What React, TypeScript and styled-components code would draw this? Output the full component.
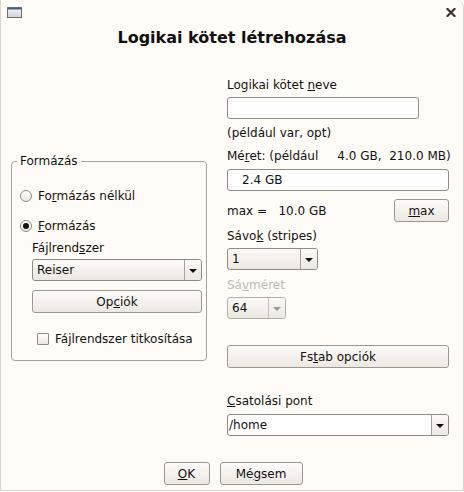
import React from "react";
import styled, { createGlobalStyle } from "styled-components";

const GlobalStyle = createGlobalStyle`
  html, body {
    margin: 0;
    padding: 0;
    background: #ffffff;
  }
`;

const Window = styled.div`
  box-sizing: border-box;
  width: 464px;
  height: 491px;
  display: flex;
  flex-direction: column;
  background: #fffcf7;
  border: 1px solid #d9d6cf;
  border-top: none;
  border-top-right-radius: 7px;
  font-family: "DejaVu Sans", "Noto Sans", sans-serif;
  font-size: 12px;
  line-height: 14px;
  color: #111111;
`;

const TitleBar = styled.div`
  height: 24px;
  display: flex;
  align-items: center;
  justify-content: space-between;
  padding: 0 7px 0 6px;
`;

const Heading = styled.h1`
  margin: 4px 0 0;
  font-size: 16px;
  line-height: 20px;
  font-weight: bold;
  text-align: center;
`;

const Body = styled.div`
  flex: 1;
  display: flex;
  align-items: flex-start;
  padding: 0 14px 0 10px;
`;

const Group = styled.fieldset`
  box-sizing: border-box;
  width: 196px;
  margin: 106px 0 0;
  padding: 0 8px 14px;
  border: 1px solid #a5a29b;
  border-radius: 4px;
  min-width: 0;
`;

const Legend = styled.legend`
  padding: 0 3px;
  margin-left: -3px;
  line-height: 14px;
`;

const OptionRow = styled.label<{ $top: number; $indent?: number }>`
  display: flex;
  align-items: center;
  gap: 6px;
  height: 14px;
  margin-top: ${(p) => p.$top}px;
  padding-left: ${(p) => p.$indent ?? 0}px;
`;

const RadioMark = styled.span<{ $on?: boolean }>`
  box-sizing: border-box;
  width: 12px;
  height: 12px;
  border-radius: 50%;
  border: 1px solid #8e8b85;
  background: linear-gradient(#ffffff, #ebe9e4);
  display: flex;
  align-items: center;
  justify-content: center;

  &::after {
    content: "";
    width: 6px;
    height: 6px;
    border-radius: 50%;
    background: ${(p) => (p.$on ? "#111111" : "transparent")};
  }
`;

const CheckMark = styled.span`
  box-sizing: border-box;
  width: 12px;
  height: 12px;
  border: 1px solid #8e8b85;
  border-radius: 1px;
  background: linear-gradient(#ffffff, #e9e7e2);
`;

const SubBlock = styled.div`
  display: flex;
  flex-direction: column;
  padding-left: 12px;
  margin-top: 8px;
`;

const RightColumn = styled.div`
  display: flex;
  flex-direction: column;
  width: 222px;
  margin: 30px 0 0 20px;
`;

const Label = styled.div<{ $top?: number; $disabled?: boolean }>`
  margin-top: ${(p) => p.$top ?? 0}px;
  white-space: pre;
  color: ${(p) => (p.$disabled ? "#bdbab3" : "inherit")};
`;

const TextInput = styled.div<{ $width: number; $top: number; $indent?: number }>`
  box-sizing: border-box;
  width: ${(p) => p.$width}px;
  height: 22px;
  margin-top: ${(p) => p.$top}px;
  padding-left: ${(p) => p.$indent ?? 4}px;
  border: 1px solid #8e8b85;
  border-radius: 3px;
  background: #ffffff;
  line-height: 20px;
`;

const Button = styled.div<{ $width: number; $top?: number }>`
  box-sizing: border-box;
  width: ${(p) => p.$width}px;
  height: 23px;
  margin-top: ${(p) => p.$top ?? 0}px;
  border: 1px solid #9a978f;
  border-radius: 3px;
  background: linear-gradient(#fdfcfa, #ebe8e2);
  display: flex;
  align-items: center;
  justify-content: center;
  flex-shrink: 0;
`;

const Combo = styled.div<{ $width: number; $top: number; $disabled?: boolean; $editable?: boolean }>`
  box-sizing: border-box;
  width: ${(p) => p.$width}px;
  height: 22px;
  margin-top: ${(p) => p.$top}px;
  display: flex;
  border: 1px solid ${(p) => (p.$disabled ? "#b3b0a9" : "#8e8b85")};
  border-radius: 3px;
  overflow: hidden;
  background: ${(p) => (p.$editable ? "#ffffff" : "linear-gradient(#fbfaf8, #ebe8e2)")};
`;

const ComboValue = styled.div<{ $pad: number }>`
  flex: 1;
  padding-left: ${(p) => p.$pad}px;
  line-height: 20px;
`;

const ComboArrow = styled.div<{ $disabled?: boolean }>`
  width: 16px;
  display: flex;
  align-items: center;
  justify-content: center;
  border-left: 1px solid ${(p) => (p.$disabled ? "#c4c1ba" : "#a5a29b")};
  background: linear-gradient(#fbfaf8, #ebe8e2);

  &::after {
    content: "";
    border-left: 4px solid transparent;
    border-right: 4px solid transparent;
    border-top: 4px solid ${(p) => (p.$disabled ? "#9d9a94" : "#111111")};
    margin-top: 1px;
  }
`;

const MaxRow = styled.div`
  display: flex;
  align-items: center;
  justify-content: space-between;
  margin-top: 8px;
`;

const Footer = styled.div`
  display: flex;
  justify-content: center;
  gap: 10px;
  padding: 0 0 5px 2px;
`;

type ComboBoxProps = {
  value: string;
  width: number;
  top: number;
  pad?: number;
  disabled?: boolean;
  editable?: boolean;
};

const ComboBox = ({ value, width, top, pad = 4, disabled, editable }: ComboBoxProps) => (
  <Combo $width={width} $top={top} $disabled={disabled} $editable={editable}>
    <ComboValue $pad={pad}>{value}</ComboValue>
    <ComboArrow $disabled={disabled} />
  </Combo>
);

const WindowIcon = () => (
  <svg width="15" height="11" viewBox="0 0 15 11">
    <defs>
      <linearGradient id="wi" x1="0" y1="0" x2="0" y2="1">
        <stop offset="0" stopColor="#f7f7fa" />
        <stop offset="1" stopColor="#cfd3dd" />
      </linearGradient>
    </defs>
    <rect x="0.5" y="0.5" width="14" height="10" fill="url(#wi)" stroke="#6e6e6e" />
    <rect x="1" y="1" width="13" height="1.5" fill="#3b5f95" />
  </svg>
);

const CloseIcon = () => (
  <svg width="10" height="9" viewBox="0 0 10 9">
    <path d="M1.5 1 L8.5 8 M8.5 1 L1.5 8" stroke="#333333" strokeWidth="2.2" strokeLinecap="square" />
  </svg>
);

const App = () => {
  return (
    <>
      <GlobalStyle />
      <Window>
        <TitleBar>
          <WindowIcon />
          <CloseIcon />
        </TitleBar>
        <Heading>Logikai kötet létrehozása</Heading>

        <Body>
          <Group>
            <Legend>Formázás</Legend>
            <OptionRow $top={21}>
              <RadioMark />
              <span>
                Fo<u>r</u>mázás nélkül
              </span>
            </OptionRow>
            <OptionRow $top={16}>
              <RadioMark $on />
              <span>
                <u>F</u>ormázás
              </span>
            </OptionRow>
            <SubBlock>
              <Label>
                Fájlrend<u>s</u>zer
              </Label>
              <ComboBox value="Reiser" width={170} top={4} />
              <Button $width={170} $top={9}>
                <span>
                  Op<u>c</u>iók
                </span>
              </Button>
            </SubBlock>
            <OptionRow $top={19} $indent={17}>
              <CheckMark />
              <span>Fájlrendszer titkosítása</span>
            </OptionRow>
          </Group>

          <RightColumn>
            <Label>
              Logikai kötet <u>n</u>eve
            </Label>
            <TextInput $width={192} $top={5} />
            <Label $top={7}>(például var, opt)</Label>
            <Label $top={9}>
              Mé<u>r</u>et: (például     4.0 GB,  210.0 MB)
            </Label>
            <TextInput $width={222} $top={6} $indent={14}>
              2.4 GB
            </TextInput>
            <MaxRow>
              <Label>max =   10.0 GB</Label>
              <Button $width={55}>
                <span>
                  <u>m</u>ax
                </span>
              </Button>
            </MaxRow>
            <Label $top={7}>
              Sávo<u>k</u> (stripes)
            </Label>
            <ComboBox value="1" width={91} top={5} />
            <Label $top={8} $disabled>
              Sá<u>v</u>méret
            </Label>
            <ComboBox value="64" width={59} top={5} disabled />
            <Button $width={222} $top={26}>
              <span>
                Fs<u>t</u>ab opciók
              </span>
            </Button>
            <Label $top={26}>
              <u>C</u>satolási pont
            </Label>
            <ComboBox value="/home" width={222} top={6} pad={1} editable />
          </RightColumn>
        </Body>

        <Footer>
          <Button $width={46}>
            <span>
              <u>O</u>K
            </span>
          </Button>
          <Button $width={83}>
            <span>
              Mé<u>g</u>sem
            </span>
          </Button>
        </Footer>
      </Window>
    </>
  );
};

export default App;
